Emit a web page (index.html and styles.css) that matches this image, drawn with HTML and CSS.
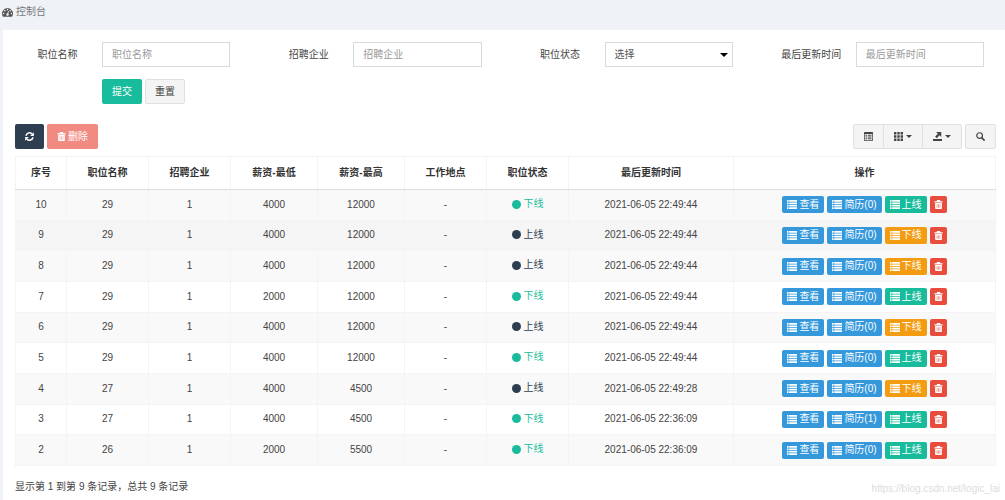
FILE: index.html
```html
<!DOCTYPE html>
<html lang="zh-CN">
<head>
    <meta charset="UTF-8">
    <meta name="viewport" content="width=device-width, initial-scale=1.0">
    <title>控制台</title>
    <link rel="stylesheet" href="styles.css">
</head>
<body>
    <svg class="sprite" aria-hidden="true">
        <symbol id="i-dashboard" viewBox="0 0 14 12"><path fill-rule="evenodd" d="M7 1a7 7 0 0 0-5.900 10.700q.2.300.5.300h10.800q.3 0 .5-.3A7 7 0 0 0 7 1zM2 7a1 1 0 1 1 0 2 1 1 0 0 1 0-2zM3.500 3.500a1 1 0 1 1 0 2 1 1 0 0 1 0-2zM7 2a1 1 0 1 1 0 2 1 1 0 0 1 0-2zM10.500 3.500a1 1 0 1 1 0 2 1 1 0 0 1 0-2zM12 7a1 1 0 1 1 0 2 1 1 0 0 1 0-2zM7.900 4.800l.9.300-.8 2.900a1.500 1.500 0 1 1-1-.3z"/></symbol>
        <symbol id="i-refresh" viewBox="0 0 12 12"><path fill="none" stroke="currentColor" stroke-width="2" d="M1.300 5A4.800 4.800 0 0 1 9.600 2.800M10.700 7A4.800 4.800 0 0 1 2.400 9.200"/><path d="M11.800.3v4.900H6.900zM.2 11.700V6.800h4.900z"/></symbol>
        <symbol id="i-trash" viewBox="0 0 12 12"><path fill-rule="evenodd" d="M4 0h4l.6 1.500H11.500v1.700H.5V1.500h2.900zM1.500 4h9v7q0 1-1 1h-7q-1 0-1-1zM3.700 5.500v4.800h.7V5.500zM5.650 5.500v4.800h.7V5.500zM7.600 5.500v4.800h.7V5.500z"/></symbol>
        <symbol id="i-list" viewBox="0 0 10 9"><path d="M0 0h1.600v1.700H0zM2.200 0H10v1.700H2.200zM0 2.400h1.600v1.700H0zM2.200 2.400H10v1.700H2.200zM0 4.800h1.600v1.700H0zM2.200 4.800H10v1.700H2.200zM0 7.200h1.600v1.700H0zM2.200 7.200H10v1.700H2.200z"/></symbol>
        <symbol id="i-toggle" viewBox="0 0 12 12"><path fill-rule="evenodd" d="M1 0h10q1 0 1 1v10q0 1-1 1H1q-1 0-1-1V1q0-1 1-1zM1 2.500v8.500h10V2.500zM2 3.800h2v1.300H2zM5 3.800h5v1.300H5zM2 6.100h2v1.300H2zM5 6.100h5v1.300H5zM2 8.400h2v1.300H2zM5 8.400h5v1.300H5z"/></symbol>
        <symbol id="i-th" viewBox="0 0 12 12"><path d="M0 0h3.200v3.200H0zM4.400 0h3.200v3.200H4.400zM8.800 0H12v3.200H8.800zM0 4.400h3.200v3.200H0zM4.400 4.400h3.200v3.200H4.400zM8.800 4.400H12v3.200H8.800zM0 8.800h3.200V12H0zM4.400 8.800h3.200V12H4.400zM8.800 8.800H12V12H8.800z"/></symbol>
        <symbol id="i-export" viewBox="0 0 12 12"><path d="M0 9.300h12V12H0zM4 0h7v6.500L8.800 4.400 5 8.200 2.800 6l3.800-3.700z"/></symbol>
        <symbol id="i-search" viewBox="0 0 12 12"><circle cx="4.800" cy="4.800" r="3.800" fill="none" stroke="currentColor" stroke-width="1.600"/><path stroke="currentColor" stroke-width="2.200" stroke-linecap="round" d="M7.900 7.900l2.900 2.900"/></symbol>
    </svg>

    <header class="breadcrumb">
        <svg class="icon"><use href="#i-dashboard"/></svg>
        <span>控制台</span>
    </header>

    <main class="panel">
        <form class="search-form">
            <div class="form-group">
                <label for="name">职位名称</label>
                <input type="text" id="name" class="form-control" placeholder="职位名称">
            </div>
            <div class="form-group">
                <label for="company">招聘企业</label>
                <input type="text" id="company" class="form-control" placeholder="招聘企业">
            </div>
            <div class="form-group">
                <label for="status">职位状态</label>
                <div class="select-box">
                    <select id="status" class="form-control">
                        <option>选择</option>
                        <option>上线</option>
                        <option>下线</option>
                    </select>
                </div>
            </div>
            <div class="form-group">
                <label for="updatetime">最后更新时间</label>
                <input type="text" id="updatetime" class="form-control" placeholder="最后更新时间">
            </div>
            <div class="form-buttons">
                <button type="submit" class="btn btn-success">提交</button>
                <button type="reset" class="btn btn-default">重置</button>
            </div>
        </form>

        <div class="toolbar">
            <button type="button" class="btn btn-primary" aria-label="刷新"><svg class="icon"><use href="#i-refresh"/></svg></button>
            <button type="button" class="btn btn-danger" disabled><svg class="icon"><use href="#i-trash"/></svg>删除</button>
            <div class="btn-group">
                <button type="button" class="btn btn-default" aria-label="切换"><svg class="icon"><use href="#i-toggle"/></svg></button>
                <button type="button" class="btn btn-default" aria-label="列"><svg class="icon"><use href="#i-th"/></svg><span class="caret"></span></button>
                <button type="button" class="btn btn-default" aria-label="导出"><svg class="icon"><use href="#i-export"/></svg><span class="caret"></span></button>
            </div>
            <button type="button" class="btn btn-default" aria-label="搜索"><svg class="icon"><use href="#i-search"/></svg></button>
        </div>

        <table class="table">
            <thead>
                <tr>
                    <th class="col-id">序号</th>
                    <th class="col-text">职位名称</th>
                    <th class="col-text">招聘企业</th>
                    <th class="col-salary">薪资-最低</th>
                    <th class="col-salary">薪资-最高</th>
                    <th class="col-text">工作地点</th>
                    <th class="col-text">职位状态</th>
                    <th class="col-time">最后更新时间</th>
                    <th>操作</th>
                </tr>
            </thead>
            <tbody id="rows"></tbody>
        </table>

        <p class="pagination-info">显示第 1 到第 9 条记录，总共 9 条记录</p>
    </main>
    <div class="watermark">https://blog.csdn.net/logic_lai</div>

    <script>
        // id, name, company, min, max, online, time, resumes
        const jobs = [
            [10, 29, 1, 4000, 12000, false, '2021-06-05 22:49:44', 0],
            [9, 29, 1, 4000, 12000, true, '2021-06-05 22:49:44', 0],
            [8, 29, 1, 4000, 12000, true, '2021-06-05 22:49:44', 0],
            [7, 29, 1, 2000, 12000, false, '2021-06-05 22:49:44', 0],
            [6, 29, 1, 4000, 12000, true, '2021-06-05 22:49:44', 0],
            [5, 29, 1, 4000, 12000, false, '2021-06-05 22:49:44', 0],
            [4, 27, 1, 4000, 4500, true, '2021-06-05 22:49:28', 0],
            [3, 27, 1, 4000, 4500, false, '2021-06-05 22:36:09', 1],
            [2, 26, 1, 2000, 5500, false, '2021-06-05 22:36:09', 0]
        ];

        function icon(name) {
            return `<svg class="icon"><use href="#i-${name}"/></svg>`;
        }

        document.getElementById('rows').innerHTML = jobs.map(([id, name, company, min, max, online, time, resumes]) => `
            <tr class="${id === 9 ? 'active' : ''}">
                <td>${id}</td>
                <td>${name}</td>
                <td>${company}</td>
                <td>${min}</td>
                <td>${max}</td>
                <td>-</td>
                <td><span class="status ${online ? 'on' : 'off'}">${online ? '上线' : '下线'}</span></td>
                <td>${time}</td>
                <td>
                    <div class="actions">
                        <button type="button" class="btn btn-xs btn-info">${icon('list')}查看</button>
                        <button type="button" class="btn btn-xs btn-info">${icon('list')}简历(${resumes})</button>
                        <button type="button" class="btn btn-xs ${online ? 'btn-warning' : 'btn-success'}">${icon('list')}${online ? '下线' : '上线'}</button>
                        <button type="button" class="btn btn-xs btn-delete" aria-label="删除">${icon('trash')}</button>
                    </div>
                </td>
            </tr>`).join('');
    </script>
</body>
</html>
```
FILE: styles.css
```css
* {
    box-sizing: border-box;
}
body {
    margin: 0;
    background-color: #eff3f7;
    color: #444;
    font-family: "Liberation Sans", "Noto Sans CJK SC", sans-serif;
    font-size: 10px;
    line-height: 16px;
    overflow: hidden;
}
.sprite {
    display: none;
}
.icon {
    width: 9px;
    height: 9px;
    fill: currentColor;
    flex: none;
}
.breadcrumb {
    display: flex;
    align-items: center;
    gap: 3px;
    padding: 4px 2px 10px;
    color: #777;
}
.breadcrumb .icon {
    width: 11px;
    height: 10px;
    color: #555;
}
.panel {
    min-height: calc(100vh - 30px);
    margin-left: 3px;
    padding: 12px 9px 6px 12px;
    background-color: white;
}

/* search form */
.search-form {
    display: grid;
    grid-template-columns: repeat(4, 1fr);
    gap: 12px 34px;
    margin: 0 12px 20px -2px;
}
.form-group {
    display: grid;
    grid-template-columns: 89px 1fr;
    align-items: center;
}
.form-group label {
    text-align: center;
}
.form-control {
    width: 100%;
    height: 25px;
    padding: 0 9px;
    border: 1px solid #d8dadc;
    border-radius: 0;
    background-color: white;
    color: #555;
    font: inherit;
    appearance: none;
}
.form-control::placeholder {
    color: #999;
}
.select-box {
    position: relative;
}
.select-box::after {
    content: "";
    position: absolute;
    right: 5px;
    top: 11px;
    border: 4px solid transparent;
    border-top-color: black;
    border-bottom: 0;
}
.form-buttons {
    display: flex;
    grid-column: 1 / -1;
    gap: 3px;
    padding-left: 89px;
}

/* buttons */
.btn {
    display: inline-flex;
    align-items: center;
    justify-content: center;
    gap: 2px;
    height: 25px;
    padding: 0 9px;
    border: 1px solid transparent;
    border-radius: 2px;
    color: white;
    font: inherit;
    white-space: nowrap;
    cursor: pointer;
}
.btn-success {
    background-color: #18bc9c;
}
.btn-default {
    background-color: #f4f4f4;
    border-color: #e0e0e0;
    color: #444;
}
.btn-primary {
    background-color: #2c3e50;
}
.btn-danger {
    background-color: #f18a81;
}
.btn-info {
    background-color: #3498db;
}
.btn-warning {
    background-color: #f39c12;
}
.btn-delete {
    background-color: #e74c3c;
}
.btn-xs {
    height: 17px;
    padding: 0 4px;
}
.actions .icon {
    width: 10px;
}
.actions .btn-delete {
    padding: 0 3px;
}
.actions .btn-delete .icon {
    width: 9px;
}
.caret {
    border: 3px solid transparent;
    border-top-color: currentColor;
    border-bottom: 0;
}
.toolbar {
    display: flex;
    gap: 3px;
    margin-bottom: 7px;
}
.toolbar .btn-default {
    gap: 3px;
    padding: 0 10px;
}
.btn-group {
    display: flex;
    margin-left: auto;
}
.btn-group .btn {
    border-radius: 0;
}
.btn-group .btn:first-child {
    border-radius: 2px 0 0 2px;
}
.btn-group .btn:last-child {
    border-radius: 0 2px 2px 0;
}
.btn-group .btn + .btn {
    margin-left: -1px;
}

/* table */
.table {
    width: 100%;
    height: 310px;
    border-collapse: collapse;
    table-layout: fixed;
    text-align: center;
}
.table th,
.table td {
    padding: 0;
    border: 1px solid #f4f4f4;
}
.table th {
    height: 33px;
    border-bottom-color: #ddd;
    color: #333;
}
.table tbody tr:nth-child(odd) {
    background-color: #f9f9f9;
}
.table tbody tr.active {
    background-color: #f5f5f5;
}
.col-id {
    width: 51px;
}
.col-text {
    width: 82px;
}
.col-salary {
    width: 87px;
}
.col-time {
    width: 165px;
}
.status {
    display: inline-flex;
    align-items: center;
    gap: 3px;
}
.status::before {
    content: "";
    width: 9px;
    height: 9px;
    border-radius: 50%;
    background-color: currentColor;
}
.status.off {
    color: #18bc9c;
}
.status.on {
    color: #2c3e50;
}
.actions {
    display: flex;
    justify-content: center;
    gap: 3px;
}
.pagination-info {
    margin: 13px 0 0;
}
.watermark {
    position: absolute;
    right: 5px;
    bottom: 3px;
    color: #ddd;
}
```
